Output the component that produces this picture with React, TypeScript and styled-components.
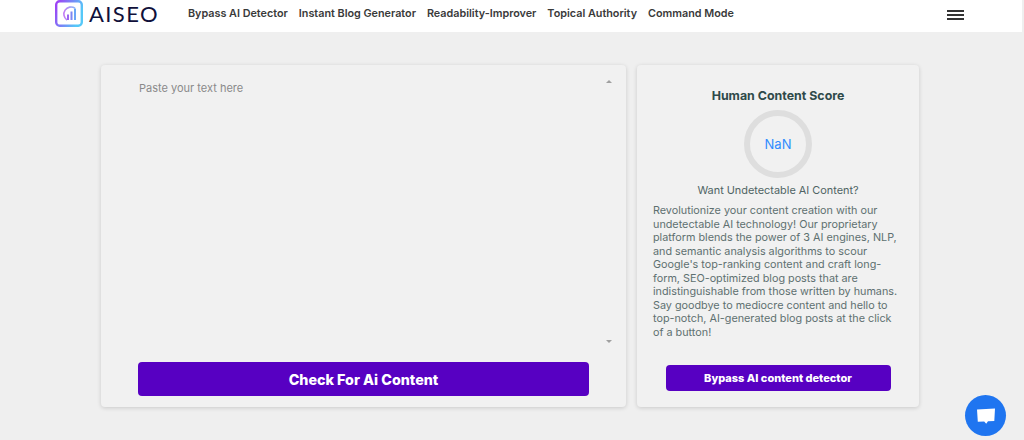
import styled, { createGlobalStyle } from 'styled-components';

const GlobalStyle = createGlobalStyle`
  html, body {
    margin: 0;
    padding: 0;
    height: 440px;
    overflow: hidden;
    background: #efefef;
    font-family: Inter, "Liberation Sans", sans-serif;
  }
  * { box-sizing: border-box; }
`

const Page = styled.div`
  width: 1024px;
  height: 440px;
  position: relative;
  overflow: hidden;
`
const Header = styled.header`
  height: 32px;
  background: #fff;
  display: flex;
  align-items: center;
  padding-left: 55px;
  margin-right: 2px;
`
const Logo = styled.div`
  display: flex;
  align-items: center;
  gap: 6px;
  width: 133px;
  margin-top: -5px;
`
const LogoText = styled.span`
  font-family: Lato, "Open Sans", sans-serif;
  font-size: 22px;
  letter-spacing: 1.4px;
  color: #10103a;
  line-height: 24px;
`
const Nav = styled.nav`
  display: flex;
  gap: 11px;
  margin-top: -5px;
`
const NavLink = styled.a`
  font-size: 10.8px;
  font-weight: 600;
  color: #3a3a3a;
  white-space: nowrap;
`
const Burger = styled.button`
  margin-left: auto;
  margin-right: 58px;
  margin-top: -2px;
  width: 17px;
  padding: 0;
  border: 0;
  background: none;
  display: flex;
  flex-direction: column;
  gap: 2px;
`
const BurgerLine = styled.span`
  height: 2px;
  background: #333;
`
const Main = styled.main`
  display: flex;
  gap: 11px;
  padding: 33px 0 0 101px;
`
const Card = styled.section<{ $width: number }>`
  width: ${p => p.$width}px;
  height: 342px;
  background: #f1f1f1;
  border-radius: 4px;
  box-shadow: 0 1px 4px rgba(0, 0, 0, 0.16);
`
const EditorCard = styled(Card)`
  position: relative;
  padding: 15px 37px 11px;
  display: flex;
  flex-direction: column;
`
const TextBox = styled.textarea`
  flex: 1;
  border: 0;
  outline: 0;
  resize: none;
  padding: 0 0 0 1px;
  background: transparent;
  font-family: inherit;
  font-size: 11px;
  line-height: 16px;
  &::placeholder { color: #8a8a8a; opacity: 1; }
`
const ScrollArrow = styled.span<{ $down?: boolean }>`
  position: absolute;
  right: 14px;
  top: ${p => (p.$down ? '275px' : '15px')};
  width: 0;
  height: 0;
  border-left: 3px solid transparent;
  border-right: 3px solid transparent;
  ${p => (p.$down ? 'border-top: 3px solid #a0a0a0;' : 'border-bottom: 3px solid #a0a0a0;')}
`
const BigButton = styled.button`
  height: 34px;
  width: 451px;
  border: 0;
  border-radius: 4px;
  background: #5700c2;
  color: #fff;
  font-family: inherit;
  font-size: 14.3px;
  font-weight: 800;
`
const ScoreCard = styled(Card)`
  padding: 24px 16px 16px;
  display: flex;
  flex-direction: column;
  align-items: center;
`
const ScoreTitle = styled.h2`
  margin: 0;
  font-size: 12.4px;
  line-height: 14px;
  font-weight: 700;
  color: #2f4a4a;
`
const Ring = styled.div`
  width: 68px;
  height: 68px;
  margin-top: 7px;
  border: 6px solid #dedede;
  border-radius: 50%;
  display: flex;
  align-items: center;
  justify-content: center;
  color: #2f8cff;
  font-size: 13px;
`
const Want = styled.p`
  margin: 5px 0 0;
  font-size: 10.9px;
  line-height: 15px;
  color: #4f6464;
`
const Blurb = styled.p`
  margin: 6px 0 0;
  font-size: 10.8px;
  line-height: 13.5px;
  color: #5e7070;
  align-self: stretch;
`
const SmallButton = styled.button`
  margin-top: auto;
  height: 26px;
  width: 225px;
  border: 0;
  border-radius: 4px;
  background: #5700c2;
  color: #fff;
  font-family: inherit;
  font-size: 11px;
  font-weight: 800;
`
const ChatBubble = styled.button`
  position: absolute;
  left: 965px;
  top: 395px;
  width: 41px;
  height: 41px;
  border: 0;
  padding: 0;
  border-radius: 50%;
  background: #1f75f0;
  display: flex;
  align-items: center;
  justify-content: center;
`

const navItems = ['Bypass AI Detector', 'Instant Blog Generator', 'Readability-Improver', 'Topical Authority', 'Command Mode']

const LogoIcon = () => (
  <svg width="28" height="27" viewBox="0 0 28 27" fill="none">
    <defs>
      <linearGradient id="logoGrad" x1="0" y1="0" x2="1" y2="0.4">
        <stop offset="0" stopColor="#a03cf5" />
        <stop offset="1" stopColor="#55c8f8" />
      </linearGradient>
      <linearGradient id="markGrad" x1="0" y1="0" x2="1" y2="0">
        <stop offset="0" stopColor="#b04ff0" />
        <stop offset="1" stopColor="#5f9df5" />
      </linearGradient>
    </defs>
    <rect x="1.2" y="1.2" width="25.6" height="24.6" rx="3.5" stroke="url(#logoGrad)" strokeWidth="2.4" />
    <path d="M20 8.2A7 7 0 1 0 12 20" stroke="url(#markGrad)" strokeWidth="1.6" opacity="0.75" />
    <rect x="12" y="14.5" width="2" height="5.5" fill="#9c66f0" />
    <rect x="15.5" y="11.5" width="2" height="8.5" fill="#7f86f2" />
    <rect x="19" y="8.5" width="2" height="11.5" fill="#6aa6f6" />
  </svg>
)

export default function App() {
  return (
    <Page>
      <GlobalStyle />
      <Header>
        <Logo>
          <LogoIcon />
          <LogoText>AISEO</LogoText>
        </Logo>
        <Nav>
          {navItems.map(item => <NavLink key={item}>{item}</NavLink>)}
        </Nav>
        <Burger aria-label="menu">
          <BurgerLine />
          <BurgerLine />
          <BurgerLine />
        </Burger>
      </Header>
      <Main>
        <EditorCard $width={525}>
          <TextBox placeholder="Paste your text here" />
          <ScrollArrow />
          <ScrollArrow $down />
          <BigButton>Check For Ai Content</BigButton>
        </EditorCard>
        <ScoreCard $width={282}>
          <ScoreTitle>Human Content Score</ScoreTitle>
          <Ring>NaN</Ring>
          <Want>Want Undetectable AI Content?</Want>
          <Blurb>
            Revolutionize your content creation with our undetectable AI technology! Our proprietary platform blends the power of 3 AI engines, NLP, and semantic analysis algorithms to scour Google's top-ranking content and craft long-form, SEO-optimized blog posts that are indistinguishable from those written by humans. Say goodbye to mediocre content and hello to top-notch, AI-generated blog posts at the click of a button!
          </Blurb>
          <SmallButton>Bypass AI content detector</SmallButton>
        </ScoreCard>
      </Main>
      <ChatBubble aria-label="chat">
        <svg width="20" height="20" viewBox="0 0 20 20">
          <path d="M1 3.5 L19 2.5 L18.3 15 L12 15.3 L10.2 17.8 L8.2 15.5 L1.8 15.8 Z" fill="#fff" />
        </svg>
      </ChatBubble>
    </Page>
  )
}
